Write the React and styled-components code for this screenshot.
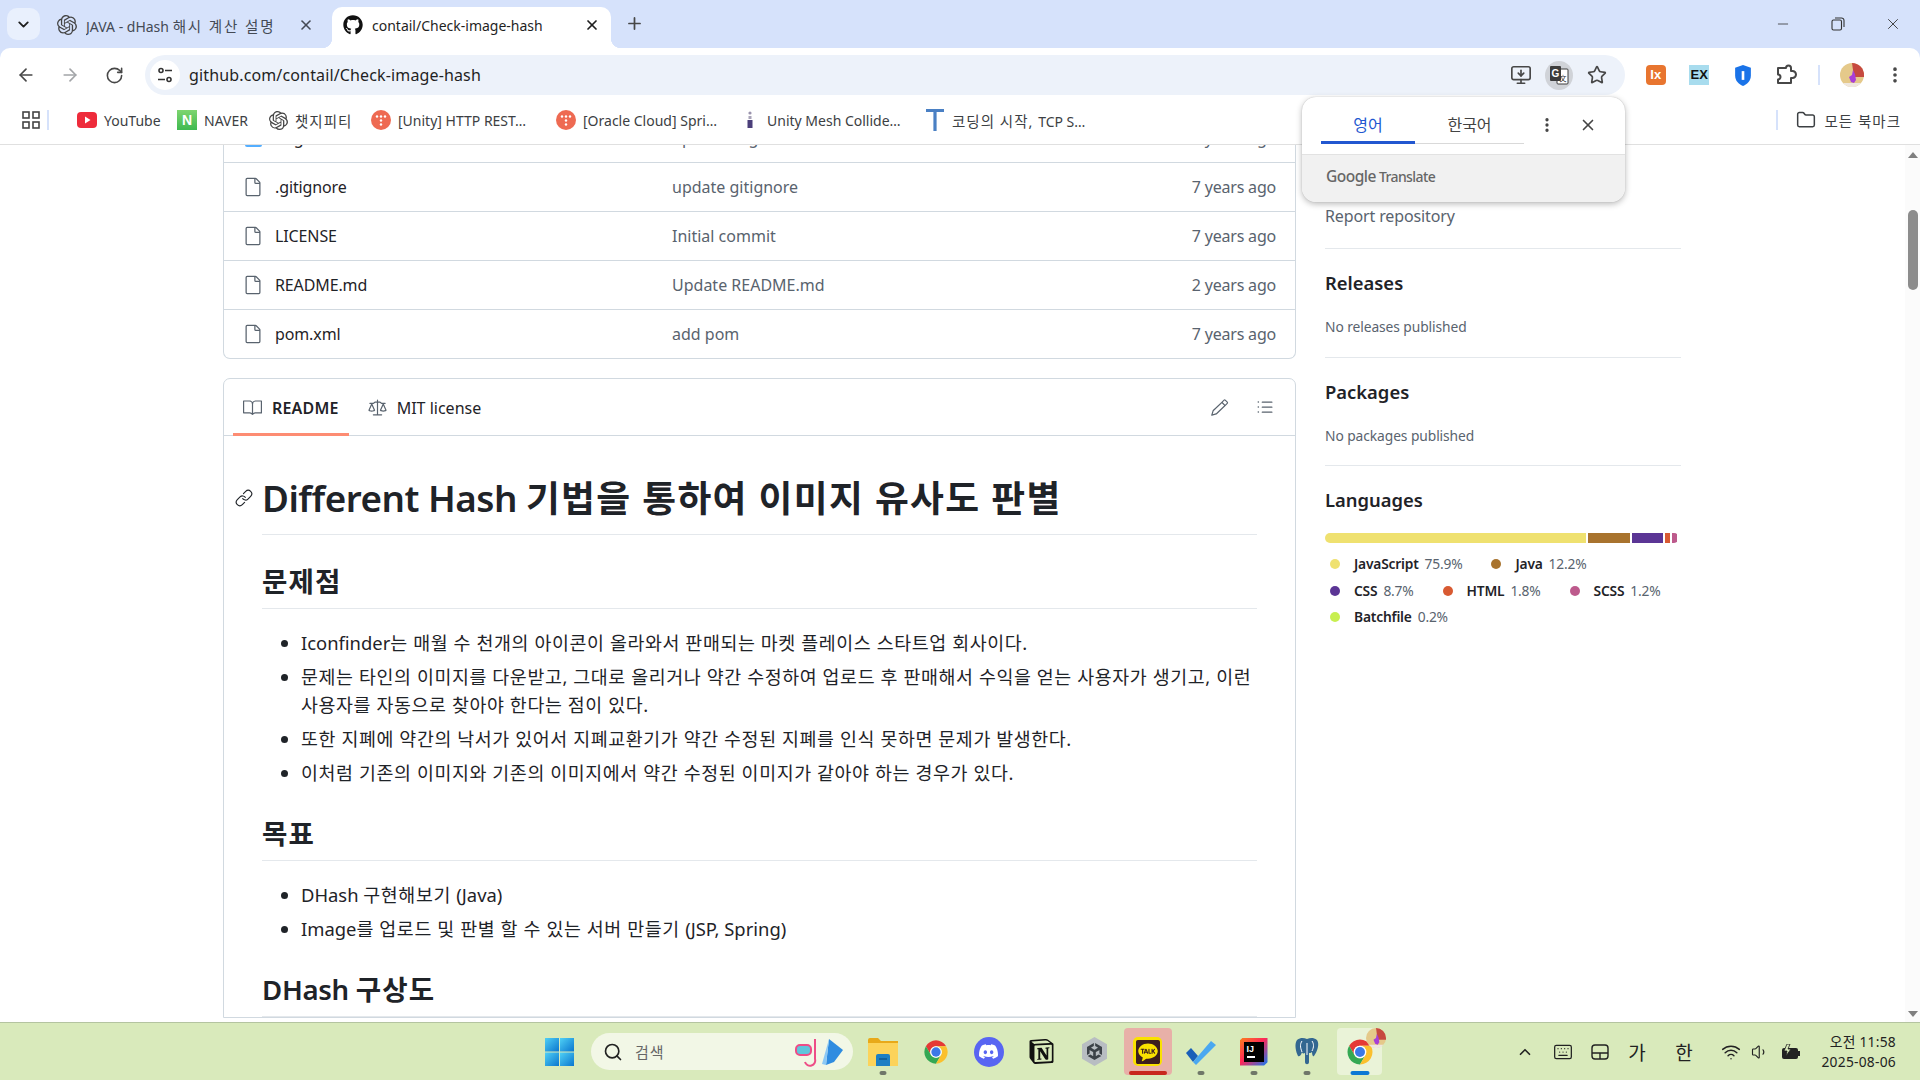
import styled, { createGlobalStyle } from 'styled-components'
import {
    ArrowLeft, ArrowRight, RotateCw, Star, X, Plus, ChevronDown, EllipsisVertical,
    Minus, Folder, MonitorDown, ChevronUp, Keyboard, Wifi, Volume1, Search,
} from 'lucide-react'
import { FaGithub } from 'react-icons/fa'
import { GoBook, GoFile, GoLaw, GoLink, GoListUnordered, GoPencil } from 'react-icons/go'
import { SiDiscord, SiKakaotalk, SiNotion, SiOpenai, SiUnity } from 'react-icons/si'

const uiFont = '"Noto Sans", "Noto Sans CJK KR", sans-serif'

const colors = {
    strip: '#d6e2fb',
    omni: '#edf2fa',
    text: '#1f2328',
    muted: '#59636e',
    border: '#d1d9e0',
    rule: '#e4e8ec',
    chrome: '#474747',
}

const GlobalStyle = createGlobalStyle`
    html, body { margin: 0; padding: 0; background: #fff; }
    body { font-family: ${uiFont}; color: ${colors.text}; }
    * { box-sizing: border-box; }
`

const Screen = styled.div`
    position: relative;
    width: 1920px;
    height: 1080px;
    overflow: hidden;
    display: flex;
    flex-direction: column;
    background: ${colors.strip};
`

// the hangul in the reference runs wider than Noto's, latin a bit narrower
const Latin = styled.span`
    letter-spacing: ${(p) => p.$spacing ?? 0}px;
`

const Hangul = styled.span`
    letter-spacing: ${(p) => p.$spacing ?? 1}px;
    font-size: ${(p) => (p.$size ? `${p.$size}px` : 'inherit')};
`

/* tab strip */
const TabStrip = styled.div`
    height: 48px;
    flex: none;
    display: flex;
    align-items: flex-end;
    padding-left: 7px;
`

const TabSearch = styled.div`
    width: 33px;
    height: 32px;
    margin-bottom: 8px;
    border-radius: 10px;
    background: #e9f0fd;
    display: flex;
    align-items: center;
    justify-content: center;
    color: #1f1f1f;
`

const Tab = styled.div`
    position: relative;
    width: ${(p) => p.$width}px;
    height: 41px;
    margin-left: ${(p) => p.$left}px;
    padding: 0 ${(p) => (p.$active ? 11 : 14)}px 5px 11px;
    display: flex;
    align-items: center;
    gap: 9px;
    border-radius: 10px 10px 0 0;
    font-size: 14px;
    color: ${(p) => (p.$active ? '#1f1f1f' : '#444a55')};
    background: ${(p) => (p.$active ? '#fff' : 'transparent')};

    ${(p) => p.$active && `
        &::before, &::after {
            content: '';
            position: absolute;
            bottom: 0;
            width: 10px;
            height: 10px;
        }
        &::before { left: -10px; background: radial-gradient(circle at 0 0, transparent 10px, #fff 10.5px); }
        &::after { right: -10px; background: radial-gradient(circle at 100% 0, transparent 10px, #fff 10.5px); }
    `}
`

const TabTitle = styled.span`
    flex: 1;
    white-space: nowrap;
    overflow: hidden;
`

const NewTab = styled.div`
    width: 28px;
    height: 28px;
    margin: 0 0 11px 9px;
    display: flex;
    align-items: center;
    justify-content: center;
    color: ${colors.chrome};
`

const WindowControls = styled.div`
    margin-left: auto;
    height: 48px;
    display: flex;
    align-items: center;
`

const WindowButton = styled.div`
    width: 55px;
    display: flex;
    justify-content: center;
    color: #333;
`

/* toolbar */
const Toolbar = styled.div`
    height: 48px;
    flex: none;
    display: flex;
    align-items: center;
    padding: 6px 0 0 4px;
    background: #fff;
    border-radius: 10px 10px 0 0;
`

const NavButton = styled.div`
    width: 44px;
    display: flex;
    justify-content: center;
    color: ${(p) => (p.$off ? '#a3a5a8' : colors.chrome)};
`

const Omnibox = styled.div`
    width: 1480px;
    height: 40px;
    margin-left: 9px;
    padding: 0 9px 0 5px;
    display: flex;
    align-items: center;
    border-radius: 20px;
    background: ${colors.omni};
`

const SiteChip = styled.div`
    width: 30px;
    height: 30px;
    border-radius: 50%;
    background: #fff;
    display: flex;
    align-items: center;
    justify-content: center;
`

const Url = styled.div`
    flex: 1;
    margin-left: 9px;
    font-size: 16px;
    letter-spacing: 0.14px;
    color: #1f1f1f;
`

const OmniAction = styled.div`
    width: 38px;
    display: flex;
    justify-content: center;
    color: ${colors.chrome};
`

const ActiveChip = styled.div`
    width: 28px;
    height: 29px;
    border-radius: 50%;
    background: #d0d3d8;
    display: flex;
    align-items: center;
    justify-content: center;
`

const Extension = styled.div`
    width: 43.5px;
    flex: none;
    display: flex;
    justify-content: center;
    color: ${colors.chrome};
`

const ExtensionRow = styled.div`
    display: flex;
    align-items: center;
    margin-left: 9px;
`

const BarDivider = styled.div`
    width: 2px;
    height: ${(p) => p.$height || 20}px;
    margin: 0 ${(p) => p.$right ?? 10}px 0 ${(p) => p.$left ?? 10}px;
    background: #d6e2fb;
`

const ExtBadge = styled.div`
    width: 20px;
    height: 20px;
    border-radius: ${(p) => p.$radius}px;
    background: ${(p) => p.$bg};
    color: ${(p) => p.$fg};
    font: 700 ${(p) => p.$size}px/20px "Liberation Sans", sans-serif;
    text-align: center;
`

/* bookmarks */
const BookmarkBar = styled.div`
    height: 49px;
    flex: none;
    display: flex;
    align-items: center;
    padding: 0 19px 0 21px;
    background: #fff;
    border-bottom: 1px solid #e0e0e0;
    font-size: 14px;
    color: #3c4043;
`

const Bookmark = styled.div`
    width: ${(p) => p.$width}px;
    flex: none;
    display: flex;
    align-items: center;
    gap: 7px;
    white-space: nowrap;
`

const BookmarkIcon = styled.div`
    width: 20px;
    height: 20px;
    flex: none;
    display: flex;
    align-items: center;
    justify-content: center;
    color: #444;
`

const NaverMark = styled.div`
    width: 20px;
    height: 20px;
    background: linear-gradient(#7ed56f, #3fb950);
    color: #fff;
    font: 700 14px/20px "Liberation Sans", sans-serif;
    text-align: center;
`

const AllBookmarks = styled.div`
    margin-left: auto;
    display: flex;
    align-items: center;
    gap: 9px;
    white-space: nowrap;
`

/* page */
const Viewport = styled.div`
    flex: 1;
    min-height: 0;
    display: flex;
    overflow: hidden;
    background: #fff;
`

const Page = styled.div`
    flex: 1;
    display: flex;
    gap: 29px;
    margin-top: -31px;
    padding-left: 223px;
    align-items: flex-start;
`

const MainColumn = styled.div`
    width: 1073px;
    flex: none;
`

const FileTable = styled.div`
    border: 1px solid ${colors.border};
    border-top: none;
    border-radius: 0 0 7px 7px;
`

const FileRow = styled.div`
    height: 49px;
    display: flex;
    align-items: center;
    padding: 0 19px 0 18.5px;
    border-bottom: 1px solid ${colors.border};
    font-size: 16px;

    &:last-child { height: 48px; border-bottom: none; }
`

const FileIcon = styled.div`
    width: 20px;
    height: 20px;
    margin-right: 12.5px;
    display: flex;
    color: ${colors.muted};
`

const FolderMark = styled.div`
    width: 17px;
    height: 16px;
    margin: 3px 0 0 2.5px;
    border-radius: 2px;
    background: #54aeff;
`

const FileName = styled.div`
    width: 397px;
    letter-spacing: -0.12px;
    color: ${colors.text};
`

const CommitMessage = styled.div`
    flex: 1;
    color: ${colors.muted};
`

const CommitAge = styled.div`
    letter-spacing: -0.2px;
    color: ${colors.muted};
`

const ReadmeBox = styled.div`
    margin-top: 19px;
    border: 1px solid ${colors.border};
    border-radius: 7px 7px 0 0;
`

const ReadmeHeader = styled.div`
    height: 57px;
    display: flex;
    padding: 0 9px;
    border-bottom: 1px solid ${colors.border};
`

const ReadmeTab = styled.div`
    height: 57px;
    padding: 3px 10px 0;
    margin-right: ${(p) => p.$right || 0}px;
    display: flex;
    align-items: center;
    gap: 10px;
    font-size: 16px;
    font-weight: ${(p) => (p.$active ? 600 : 400)};
    letter-spacing: ${(p) => (p.$active ? 0.2 : 0)}px;
    border-bottom: 3px solid ${(p) => (p.$active ? '#fd8c73' : 'transparent')};

    svg { color: ${colors.muted}; }
`

const ReadmeActions = styled.div`
    margin-left: auto;
    display: flex;
    align-items: center;
    gap: 26px;
    padding-right: 11px;
    color: ${colors.muted};
`

const Markdown = styled.div`
    padding: 37px 38px 0;
`

const Title = styled.h1`
    position: relative;
    margin: 0;
    padding-bottom: 11px;
    font-size: 36.8px;
    line-height: 50px;
    font-weight: 600;
    letter-spacing: 1.3px;
    border-bottom: 1px solid ${colors.rule};
`

const TitleLink = styled.span`
    position: absolute;
    left: -27px;
    top: 16px;
    display: flex;
    color: ${colors.text};
`

const Subtitle = styled.h2`
    margin: 26px 0 0;
    padding-bottom: 7px;
    font-size: 27.6px;
    line-height: 40px;
    font-weight: 600;
    letter-spacing: 1.1px;
    border-bottom: 1px solid ${colors.rule};
`

const Bullets = styled.ul`
    margin: 20px 0 0;
    padding-left: 39px;
    font-size: 18.4px;
    line-height: 28px;
    letter-spacing: 0.6px;
    word-break: keep-all;
`

const Bullet = styled.li`
    & + & { margin-top: 6px; }
`

/* sidebar */
const Sidebar = styled.aside`
    width: 356px;
    flex: none;
    padding-top: 90px;
`

const ReportLink = styled.div`
    padding-bottom: 20px;
    font-size: 16px;
    line-height: 24px;
    letter-spacing: -0.12px;
    color: ${colors.muted};
`

const SideSection = styled.section`
    padding: 22px 0 ${(p) => p.$bottom || 20}px;
    border-top: 1px solid ${colors.rule};
`

const SideHeading = styled.h2`
    margin: 0;
    font-size: 18.4px;
    line-height: 24px;
    font-weight: 600;
`

const SideNote = styled.div`
    margin-top: 22px;
    font-size: 13.8px;
    line-height: 20px;
    letter-spacing: -0.08px;
    color: ${colors.muted};
`

const LangBar = styled.div`
    width: 354px;
    height: 10px;
    margin-top: 21px;
    display: flex;
    gap: 2px;
    overflow: hidden;
    border-radius: 5px;
`

const LangPart = styled.div`
    background: ${(p) => p.$color};
    flex: none;
`

const LangList = styled.div`
    margin-top: 11px;
    display: flex;
    flex-wrap: wrap;
    row-gap: 6.5px;
    column-gap: 24px;
`

const LangItem = styled.div`
    padding-left: 5px;
    display: flex;
    align-items: center;
    font-size: 13.8px;
    line-height: 20px;
    letter-spacing: -0.2px;
    color: ${colors.muted};

    b { margin-right: 6px; font-weight: 600; color: ${colors.text}; }
`

const LangDot = styled.span`
    width: 10px;
    height: 10px;
    margin-right: 14px;
    border-radius: 50%;
    background: ${(p) => p.$color};
`

const Scrollbar = styled.div`
    width: 15px;
    flex: none;
    display: flex;
    flex-direction: column;
    align-items: center;
    padding: 7px 0 5px;
    background: #fbfbfb;
`

const ScrollArrow = styled.div`
    width: 0;
    height: 0;
    border-left: 5.5px solid transparent;
    border-right: 5.5px solid transparent;
    ${(p) => (p.$down ? 'border-top: 6px solid #7f7f7f; margin-top: auto;' : 'border-bottom: 6px solid #7f7f7f;')}
`

const ScrollThumb = styled.div`
    width: 10px;
    height: 80px;
    margin-top: 52px;
    border-radius: 5px;
    background: #8c8c8c;
`

/* translate bubble */
const TranslateBubble = styled.div`
    position: absolute;
    left: 1302px;
    top: 97px;
    width: 323px;
    height: 105px;
    border-radius: 14px;
    background: #fff;
    box-shadow: 0 2px 6px rgba(0, 0, 0, 0.28), 0 0 1px rgba(0, 0, 0, 0.25);
    overflow: hidden;
`

const BubbleTop = styled.div`
    height: 57px;
    display: flex;
    padding-left: 19px;
`

const LangTabs = styled.div`
    width: 203px;
    height: 47px;
    display: flex;
    border-bottom: 1px solid #d9d9d9;
`

const LangTab = styled.div`
    width: ${(p) => p.$width}px;
    height: 47px;
    padding-top: 14px;
    text-align: center;
    font-size: 16px;
    line-height: 28px;
    color: ${(p) => (p.$active ? '#2257d0' : '#444')};
    border-bottom: 3px solid ${(p) => (p.$active ? '#2257d0' : 'transparent')};
`

const BubbleAction = styled.div`
    width: ${(p) => p.$width}px;
    height: 47px;
    padding-top: 19px;
    display: flex;
    justify-content: center;
    color: #444;
`

const BubbleFooter = styled.div`
    height: 48px;
    padding: 0 0 5px 24px;
    display: flex;
    align-items: center;
    gap: 3px;
    background: #f1f1f1;
    border-top: 1px solid #e2e2e2;
    color: #666;
    font-size: 14px;
    font-weight: 500;
    letter-spacing: -0.6px;
`

const GoogleWord = styled.span`
    font-size: 15.5px;
    font-weight: 500;
    letter-spacing: -0.5px;
`

/* taskbar */
const Taskbar = styled.div`
    height: 58px;
    flex: none;
    display: flex;
    align-items: center;
    padding: 0 24px 0 545px;
    background: #d9eabb;
    border-top: 1px solid #b4c4a0;
`

const SearchBox = styled.div`
    width: 262px;
    height: 37px;
    margin: 0 3px 0 17px;
    padding: 0 8px 0 12px;
    display: flex;
    align-items: center;
    border-radius: 19px;
    background: #f2f7e6;
    color: #666;
    font-size: 15px;
`

const SearchLabel = styled.span`
    flex: 1;
    margin-left: 12px;
    letter-spacing: 1px;
`

const TaskSlot = styled.div`
    position: relative;
    width: 53px;
    height: 47px;
    flex: none;
    display: flex;
    align-items: center;
    justify-content: center;
    color: #111;
`

const TaskHighlight = styled.div`
    width: ${(p) => p.$width}px;
    height: 47px;
    display: flex;
    align-items: center;
    justify-content: center;
    border-radius: 4px;
    background: ${(p) => p.$bg};
`

const RunningMark = styled.span`
    position: absolute;
    bottom: 0;
    left: 50%;
    width: ${(p) => p.$width || 7}px;
    height: 4px;
    transform: translateX(-50%);
    border-radius: 2px;
    background: ${(p) => p.$color || '#6f7769'};
`

const Tray = styled.div`
    margin-left: auto;
    display: flex;
    align-items: center;
    color: #222;
`

const TraySlot = styled.div`
    width: ${(p) => p.$width}px;
    display: flex;
    justify-content: center;
    font-size: 19px;
`

const Clock = styled.div`
    width: 84px;
    text-align: right;
    font-size: 13.8px;
    line-height: 20px;
    letter-spacing: 0.25px;
`

const KakaoMark = styled.div`
    width: 29px;
    height: 29px;
    border-radius: 5px;
    background: #fae100;
    display: flex;
    align-items: center;
    justify-content: center;
    color: #3c1e1e;
`

const DiscordBadge = styled.div`
    width: 30px;
    height: 30px;
    border-radius: 50%;
    background: #5865f2;
    color: #fff;
    display: flex;
    align-items: center;
    justify-content: center;
`

const UnityBadge = styled.div`
    width: 25px;
    height: 29px;
    clip-path: polygon(50% 0, 100% 25%, 100% 75%, 50% 100%, 0 75%, 0 25%);
    background: #b8bdc2;
    color: #3c4248;
    display: flex;
    align-items: center;
    justify-content: center;
`

const IdeaFrame = styled.div`
    width: 28px;
    height: 28px;
    padding: 4px;
    background: linear-gradient(135deg, #fc801d 0%, #fe2857 45%, #087cfa 100%);
    clip-path: polygon(12% 0, 100% 0, 100% 88%, 88% 100%, 0 100%, 0 12%);
`

const IdeaBadge = styled.div`
    width: 20px;
    height: 20px;
    padding: 2px 0 0 3px;
    background: #000;
    color: #fff;
    font: 700 9px/10px "Liberation Sans", sans-serif;

    &::after {
        content: '';
        display: block;
        width: 8px;
        height: 2px;
        margin-top: 2px;
        background: #fff;
    }
`

const ChromeWithProfile = styled.div`
    position: relative;
    display: flex;
`

const ProfileOverlay = styled.div`
    position: absolute;
    top: -9px;
    right: -11px;
    display: flex;
`

const ChromeLogo = ({ size = 28 }) => (
    <svg width={size} height={size} viewBox="0 0 48 48">
        <path fill="#e53935" d="M6.68 14A20 20 0 0 1 41.32 14H24a10 10 0 0 0-8.66 15z" />
        <path fill="#34a853" d="M6.68 14A20 20 0 0 0 24 44l8.66-15a10 10 0 0 1-17.32 0z" />
        <path fill="#fbc02d" d="M24 44A20 20 0 0 0 41.32 14H24a10 10 0 0 1 8.66 15z" />
        <circle cx="24" cy="24" r="10" fill="#fff" />
        <circle cx="24" cy="24" r="8" fill="#3b78e7" />
    </svg>
)

const ProfilePicture = ({ size }) => (
    <svg width={size} height={size} viewBox="0 0 24 24">
        <circle cx="12" cy="12" r="12" fill="#e5c98a" />
        <path fill="#c6493f" d="M12 0a12 12 0 0 1 12 12v2H14z" />
        <path fill="#efe7df" d="M3 20h18a12 12 0 0 1-18 0z" />
        <path fill="#a83fd6" d="M13 7l2 4 1 6-2 3-3-1-2-5 3-2z" />
    </svg>
)

const TistoryFavicon = () => (
    <svg width="20" height="20" viewBox="0 0 20 20">
        <circle cx="10" cy="10" r="10" fill="#ee6a52" />
        <g fill="#fff">
            <circle cx="6" cy="6.5" r="1.2" /><circle cx="10" cy="6.5" r="1.2" /><circle cx="14" cy="6.5" r="1.2" />
            <circle cx="10" cy="10.5" r="1.2" /><circle cx="10" cy="14.5" r="1.2" />
        </g>
    </svg>
)

const TranslateGlyph = () => (
    <svg width="20" height="20" viewBox="0 0 20 20">
        <rect x="8" y="4" width="11" height="15" rx="1" fill="#fff" stroke="#3c3c3c" />
        <rect x="1" y="1" width="11" height="15" rx="1" fill="#3c3c3c" />
        <text x="6.5" y="12" fontSize="10" fontWeight="700" fill="#fff" textAnchor="middle" fontFamily="Liberation Sans">G</text>
        <text x="14" y="16" fontSize="7" fill="#333" textAnchor="middle" fontFamily="Noto Sans CJK KR">文</text>
    </svg>
)

const TuneGlyph = () => (
    <svg width="18" height="18" viewBox="0 0 18 18" fill="none" stroke="#333" strokeWidth="1.6">
        <circle cx="5" cy="4.5" r="2" />
        <path d="M9 4.5h7M2 13.5h7" />
        <circle cx="13" cy="13.5" r="2" />
    </svg>
)

const RestoreGlyph = () => (
    <svg width="14" height="14" viewBox="0 0 14 14" fill="none" stroke="#333" strokeWidth="1.1">
        <rect x="1" y="3" width="9.5" height="10" rx="1.5" />
        <path d="M4 1h6.5A2.5 2.5 0 0 1 13 3.5V10" />
    </svg>
)

const PuzzleGlyph = () => (
    <svg width="22" height="22" viewBox="0 0 22 22" fill="none" stroke="#474747" strokeWidth="2" strokeLinejoin="round">
        <path d="M3 4h8a2.5 2.5 0 0 1 5 0v3h1.5a3 3 0 0 1 0 7H16v5H3v-3.5a2.5 2.5 0 0 0 0-5z" />
    </svg>
)

const ElephantMark = () => (
    <svg width="26" height="30" viewBox="0 0 26 30">
        <path fill="#336791" d="M3 3C7 0 10 1 13 2c3-1 6-2 10 1 3 4 0 12-3 16-1 1-2-1-2-4-1 1-2 1-3 1v9c0 3-4 3-4 0v-9c-2 1-3 0-3-1-1 4-3 5-4 4C2 15 0 7 3 3z" />
        <path fill="none" stroke="#fff" strokeWidth="1" d="M8 4c-2 3-2 6 0 11M18 4c2 3 2 6 0 10M13 6v12" />
    </svg>
)

const WindowsLogo = () => (
    <svg width="29" height="28" viewBox="0 0 29 28">
        <defs>
            <linearGradient id="winBlue" x1="0" y1="0" x2="1" y2="1">
                <stop offset="0" stopColor="#4fd0f5" />
                <stop offset="1" stopColor="#0a76cf" />
            </linearGradient>
        </defs>
        <g fill="url(#winBlue)">
            <rect width="14" height="13.5" /><rect x="15" width="14" height="13.5" />
            <rect y="14.5" width="14" height="13.5" /><rect x="15" y="14.5" width="14" height="13.5" />
        </g>
    </svg>
)

const ExplorerFolder = () => (
    <svg width="30" height="28" viewBox="0 0 30 28">
        <path fill="#e8a919" d="M0 2a2 2 0 0 1 2-2h8l3 3h17v6H0z" />
        <path fill="#fcd35a" d="M0 5h30v23H0z" />
        <path fill="#1d7fc4" d="M8 18a2 2 0 0 1 2-2h10a2 2 0 0 1 2 2v10H8z" />
        <path stroke="#0b4f86" strokeWidth="1.2" d="M11 21h8" />
    </svg>
)

const SnorkelDoodle = () => (
    <svg width="50" height="30" viewBox="0 0 50 30">
        <path fill="none" stroke="#ee4d87" strokeWidth="2" d="M20 2v20a5 5 0 0 1-10 3" />
        <rect x="1" y="8" width="15" height="10" rx="4" fill="#5fc5dc" stroke="#ee4d87" strokeWidth="2" />
        <path fill="#2f8ce0" d="M34 2l14 11-9 12-8 3z" />
        <path fill="#8cc9f5" d="M34 2l-3 26-4-1z" />
    </svg>
)

const files = [
    { name: 'img', message: 'update img', age: '7 years ago', folder: true },
    { name: '.gitignore', message: 'update gitignore', age: '7 years ago' },
    { name: 'LICENSE', message: 'Initial commit', age: '7 years ago' },
    { name: 'README.md', message: 'Update README.md', age: '2 years ago' },
    { name: 'pom.xml', message: 'add pom', age: '7 years ago' },
]

const bookmarks = [
    {
        id: 'youtube',
        label: 'YouTube',
        width: 100,
        icon: (
            <svg width="20" height="16" viewBox="0 0 20 16">
                <rect width="20" height="16" rx="4" fill="#ee2b3b" />
                <path fill="#fff" d="M8 4.5l5.5 3.5L8 11.5z" />
            </svg>
        ),
    },
    { id: 'naver', label: 'NAVER', width: 91, icon: <NaverMark>N</NaverMark> },
    { id: 'gpt', label: <Hangul $size={14.5} $spacing={1}>챗지피티</Hangul>, width: 103, icon: <SiOpenai size={19} /> },
    { id: 'unity-http', label: '[Unity] HTTP REST…', width: 185, icon: <TistoryFavicon /> },
    { id: 'oracle', label: '[Oracle Cloud] Spri…', width: 184, icon: <TistoryFavicon /> },
    {
        id: 'unity-mesh',
        label: 'Unity Mesh Collide…',
        width: 185,
        icon: (
            <svg width="8" height="20" viewBox="0 0 8 20">
                <circle cx="4" cy="3" r="1.6" fill="#9a93ad" />
                <rect x="2.5" y="6" width="3" height="3" fill="#a8a3b8" />
                <rect x="1.5" y="10" width="5" height="8" fill="#4b3f7a" />
            </svg>
        ),
    },
    {
        id: 'tcp',
        label: <span><Hangul $size={14.5} $spacing={1}>코딩의 시작, </Hangul>TCP S…</span>,
        width: 170,
        icon: (
            <svg width="20" height="24" viewBox="0 0 20 24">
                <path fill="#4a80c4" d="M1 1h18v3h-7.4v19H8.4V4H1z" />
            </svg>
        ),
    },
]

const languages = [
    { name: 'JavaScript', share: '75.9%', color: '#efe170', width: 261 },
    { name: 'Java', share: '12.2%', color: '#a8732e', width: 42 },
    { name: 'CSS', share: '8.7%', color: '#5b3595', width: 30.5 },
    { name: 'HTML', share: '1.8%', color: '#d85a32', width: 5.5 },
    { name: 'SCSS', share: '1.2%', color: '#bd5a8c', width: 4.5 },
    { name: 'Batchfile', share: '0.2%', color: '#c8ef50', width: 2 },
]

const App = () => (
    <Screen>
        <GlobalStyle />

        <TabStrip>
            <TabSearch><ChevronDown size={17} strokeWidth={2.6} /></TabSearch>
            <Tab $width={282} $left={6}>
                <SiOpenai size={20} color="#444" />
                <TabTitle>JAVA - dHash <Hangul $size={14.5} $spacing={1.9}>해시 계산 설명</Hangul></TabTitle>
                <X size={16} strokeWidth={2.4} />
            </Tab>
            <Tab $width={279} $left={4} $active>
                <FaGithub size={20} color="#111" />
                <TabTitle>contail/Check-image-hash</TabTitle>
                <X size={16} strokeWidth={2.6} />
            </Tab>
            <NewTab><Plus size={19} strokeWidth={2.2} /></NewTab>
            <WindowControls>
                <WindowButton><Minus size={16} strokeWidth={1.2} /></WindowButton>
                <WindowButton><RestoreGlyph /></WindowButton>
                <WindowButton><X size={18} strokeWidth={1.2} /></WindowButton>
            </WindowControls>
        </TabStrip>

        <Toolbar>
            <NavButton><ArrowLeft size={20} /></NavButton>
            <NavButton $off><ArrowRight size={20} /></NavButton>
            <NavButton><RotateCw size={19} /></NavButton>
            <Omnibox>
                <SiteChip><TuneGlyph /></SiteChip>
                <Url>github.com/contail/Check-image-hash</Url>
                <OmniAction><MonitorDown size={22} strokeWidth={1.8} /></OmniAction>
                <OmniAction><ActiveChip><TranslateGlyph /></ActiveChip></OmniAction>
                <OmniAction><Star size={20} strokeWidth={2} /></OmniAction>
            </Omnibox>
            <ExtensionRow>
                <Extension><ExtBadge $bg="#e8752f" $fg="#fff" $size={13} $radius={4}>Ix</ExtBadge></Extension>
                <Extension><ExtBadge $bg="#a8dcee" $fg="#111" $size={13} $radius={0}>EX</ExtBadge></Extension>
                <Extension>
                    <svg width="16" height="21" viewBox="0 0 18 24">
                        <path fill="#1a73e8" d="M9 0l9 3v9c0 6-4 10-9 12-5-2-9-6-9-12V3z" />
                        <rect x="7.5" y="7" width="3" height="10" fill="#fff" />
                    </svg>
                </Extension>
                <Extension><PuzzleGlyph /></Extension>
                <BarDivider />
                <Extension><ProfilePicture size={24} /></Extension>
                <Extension><EllipsisVertical size={20} strokeWidth={2.4} /></Extension>
            </ExtensionRow>
        </Toolbar>

        <BookmarkBar>
            <BookmarkIcon>
                <svg width="18" height="18" viewBox="0 0 18 18" fill="none" stroke="#444" strokeWidth="1.6">
                    <rect x="1" y="1" width="6" height="6" /><rect x="11" y="1" width="6" height="6" />
                    <rect x="1" y="11" width="6" height="6" /><rect x="11" y="11" width="6" height="6" />
                </svg>
            </BookmarkIcon>
            <BarDivider $left={6} $right={28} />
            {bookmarks.map((b) => (
                <Bookmark key={b.id} $width={b.width}>
                    <BookmarkIcon>{b.icon}</BookmarkIcon>
                    {b.label}
                </Bookmark>
            ))}
            <AllBookmarks>
                <BarDivider $left={0} $right={9} />
                <Folder size={20} strokeWidth={1.8} />
                <Hangul $size={14.5} $spacing={1}>모든 북마크</Hangul>
            </AllBookmarks>
        </BookmarkBar>

        <Viewport>
            <Page>
                <MainColumn>
                    <FileTable>
                        {files.map((f) => (
                            <FileRow key={f.name}>
                                <FileIcon>{f.folder ? <FolderMark /> : <GoFile size={20} />}</FileIcon>
                                <FileName>{f.name}</FileName>
                                <CommitMessage>{f.message}</CommitMessage>
                                <CommitAge>{f.age}</CommitAge>
                            </FileRow>
                        ))}
                    </FileTable>

                    <ReadmeBox>
                        <ReadmeHeader>
                            <ReadmeTab $active $right={9}><GoBook size={19} />README</ReadmeTab>
                            <ReadmeTab><GoLaw size={19} />MIT license</ReadmeTab>
                            <ReadmeActions>
                                <GoPencil size={19} />
                                <GoListUnordered size={20} />
                            </ReadmeActions>
                        </ReadmeHeader>
                        <Markdown>
                            <Title>
                                <TitleLink><GoLink size={18} /></TitleLink>
                                <Latin $spacing={-0.5}>Different Hash </Latin>기법을 통하여 이미지 유사도 판별
                            </Title>
                            <Subtitle>문제점</Subtitle>
                            <Bullets>
                                <Bullet><Latin>Iconfinder</Latin>는 매월 수 천개의 아이콘이 올라와서 판매되는 마켓 플레이스 스타트업 회사이다.</Bullet>
                                <Bullet>문제는 타인의 이미지를 다운받고, 그대로 올리거나 약간 수정하여 업로드 후 판매해서 수익을 얻는 사용자가 생기고, 이런 사용자를 자동으로 찾아야 한다는 점이 있다.</Bullet>
                                <Bullet>또한 지폐에 약간의 낙서가 있어서 지폐교환기가 약간 수정된 지폐를 인식 못하면 문제가 발생한다.</Bullet>
                                <Bullet>이처럼 기존의 이미지와 기존의 이미지에서 약간 수정된 이미지가 같아야 하는 경우가 있다.</Bullet>
                            </Bullets>
                            <Subtitle>목표</Subtitle>
                            <Bullets>
                                <Bullet><Latin>DHash </Latin>구현해보기 <Latin>(Java)</Latin></Bullet>
                                <Bullet><Latin>Image</Latin>를 업로드 및 판별 할 수 있는 서버 만들기 <Latin>(JSP, Spring)</Latin></Bullet>
                            </Bullets>
                            <Subtitle><Latin $spacing={-0.3}>DHash </Latin>구상도</Subtitle>
                        </Markdown>
                    </ReadmeBox>
                </MainColumn>

                <Sidebar>
                    <ReportLink>Report repository</ReportLink>
                    <SideSection>
                        <SideHeading>Releases</SideHeading>
                        <SideNote>No releases published</SideNote>
                    </SideSection>
                    <SideSection $bottom={19}>
                        <SideHeading>Packages</SideHeading>
                        <SideNote>No packages published</SideNote>
                    </SideSection>
                    <SideSection>
                        <SideHeading>Languages</SideHeading>
                        <LangBar>
                            {languages.map((l) => (
                                <LangPart key={l.name} $color={l.color} style={{ width: l.width }} />
                            ))}
                        </LangBar>
                        <LangList>
                            {languages.map((l) => (
                                <LangItem key={l.name}>
                                    <LangDot $color={l.color} />
                                    <b>{l.name}</b>
                                    {l.share}
                                </LangItem>
                            ))}
                        </LangList>
                    </SideSection>
                </Sidebar>
            </Page>
            <Scrollbar>
                <ScrollArrow />
                <ScrollThumb />
                <ScrollArrow $down />
            </Scrollbar>
        </Viewport>

        <Taskbar>
            <WindowsLogo />
            <SearchBox>
                <Search size={20} color="#222" />
                <SearchLabel>검색</SearchLabel>
                <SnorkelDoodle />
            </SearchBox>
            <TaskSlot><ExplorerFolder /><RunningMark /></TaskSlot>
            <TaskSlot><ChromeLogo /></TaskSlot>
            <TaskSlot><DiscordBadge><SiDiscord size={19} /></DiscordBadge></TaskSlot>
            <TaskSlot><SiNotion size={25} /></TaskSlot>
            <TaskSlot><UnityBadge><SiUnity size={17} /></UnityBadge></TaskSlot>
            <TaskSlot>
                <TaskHighlight $width={48} $bg="#e8b0a8"><KakaoMark><SiKakaotalk size={24} /></KakaoMark></TaskHighlight>
                <RunningMark $width={38} $color="#c8281e" />
            </TaskSlot>
            <TaskSlot>
                <svg width="30" height="26" viewBox="0 0 30 26">
                    <path fill="#1a5fb8" d="M0 14l5-5 7 8-5 6z" />
                    <path fill="#4aa8f0" d="M7 23L25 2l5 4-20 20z" />
                </svg>
                <RunningMark />
            </TaskSlot>
            <TaskSlot><IdeaFrame><IdeaBadge>IJ</IdeaBadge></IdeaFrame><RunningMark /></TaskSlot>
            <TaskSlot><ElephantMark /><RunningMark /></TaskSlot>
            <TaskSlot>
                <TaskHighlight $width={45} $bg="#eaf3d8">
                    <ChromeWithProfile>
                        <ChromeLogo size={30} />
                        <ProfileOverlay><ProfilePicture size={20} /></ProfileOverlay>
                    </ChromeWithProfile>
                </TaskHighlight>
                <RunningMark $width={19} $color="#0a78d4" />
            </TaskSlot>
            <Tray>
                <TraySlot $width={38}><ChevronUp size={18} strokeWidth={2.2} /></TraySlot>
                <TraySlot $width={38}><Keyboard size={20} strokeWidth={1.5} /></TraySlot>
                <TraySlot $width={36}>
                    <svg width="18" height="16" viewBox="0 0 18 16" fill="none" stroke="#222" strokeWidth="1.4">
                        <rect x="1" y="1" width="16" height="14" rx="3" />
                        <path d="M1 9h16M9 9v6" />
                    </svg>
                </TraySlot>
                <TraySlot $width={38}>가</TraySlot>
                <TraySlot $width={56}>한</TraySlot>
                <TraySlot $width={38}><Wifi size={20} strokeWidth={1.8} /></TraySlot>
                <TraySlot $width={20}><Volume1 size={18} strokeWidth={1.5} /></TraySlot>
                <TraySlot $width={42}>
                    <svg width="20" height="16" viewBox="0 0 20 16">
                        <rect x="1" y="4" width="16" height="11" rx="2" fill="#222" />
                        <rect x="17" y="7" width="2" height="5" fill="#222" />
                        <path fill="#d9eabb" stroke="#222" strokeWidth=".8" d="M6 0L3 7h3l-1 5 5-7H7l2-5z" />
                    </svg>
                </TraySlot>
                <Clock>오전 11:58<br />2025-08-06</Clock>
            </Tray>
        </Taskbar>

        <TranslateBubble>
            <BubbleTop>
                <LangTabs>
                    <LangTab $width={94} $active>영어</LangTab>
                    <LangTab $width={109}>한국어</LangTab>
                </LangTabs>
                <BubbleAction $width={46}><EllipsisVertical size={18} strokeWidth={2.4} /></BubbleAction>
                <BubbleAction $width={36}><X size={18} strokeWidth={2.2} /></BubbleAction>
            </BubbleTop>
            <BubbleFooter>
                <GoogleWord>Google</GoogleWord>
                Translate
            </BubbleFooter>
        </TranslateBubble>
    </Screen>
)

export default App
